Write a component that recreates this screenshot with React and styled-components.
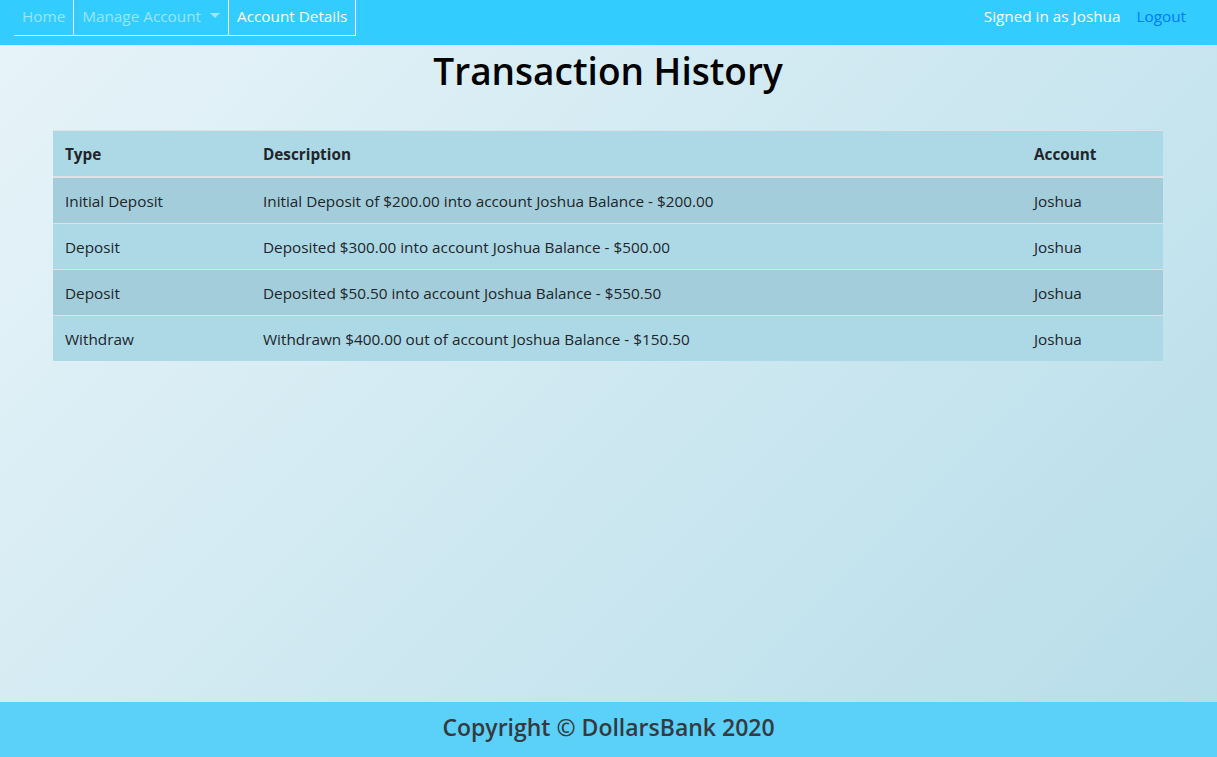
import React from "react";
import styled, { createGlobalStyle } from "styled-components";

const FONT = `"Segoe UI", "Open Sans", "Noto Sans", sans-serif`;

const Global = createGlobalStyle`
  html, body { margin: 0; padding: 0; height: 100%; }
  body {
    font-family: ${FONT};
    font-size: 15.3px;
    line-height: 23px;
    color: #212529;
  }
  #root { min-height: 100vh; }
`;

const Page = styled.div`
  min-height: 757px;
  display: flex;
  flex-direction: column;
  background: linear-gradient(135deg, #e8f4f9 0%, #b6dde9 100%);
`;

const NavBar = styled.nav`
  height: 45px;
  background: #33ccff;
  display: flex;
  align-items: flex-start;
  justify-content: space-between;
  padding: 0 31px 0 14px;
  box-sizing: border-box;
`;

const Tabs = styled.ul`
  list-style: none;
  margin: 0;
  padding: 0;
  display: flex;
  border-bottom: 1px solid #ffffff;
`;

const Tab = styled.li`
  height: 35px;
  box-sizing: border-box;
  padding: 0 8px 2px;
  display: flex;
  align-items: center;
  gap: 9px;
  color: ${(p) => (p.$active ? "#ffffff" : "rgba(255,255,255,0.5)")};
  border-left: ${(p) => (p.$left ? "1px solid #fff" : "0")};
  border-right: ${(p) => (p.$right ? "1px solid #fff" : "0")};
  cursor: pointer;
`;

const Caret = styled.span`
  width: 0;
  height: 0;
  border-left: 5px solid transparent;
  border-right: 5px solid transparent;
  border-top: 5px solid rgba(255,255,255,0.5);
  margin-top: -2px;
`;

const UserArea = styled.div`
  height: 35px;
  box-sizing: border-box;
  padding-bottom: 2px;
  display: flex;
  align-items: center;
  gap: 16px;
`;

const Signed = styled.span`
  color: #ffffff;
`;

const Logout = styled.a`
  color: #007bff;
  text-decoration: none;
`;

const Main = styled.main`
  flex: 1;
  display: flex;
  flex-direction: column;
  align-items: center;
  padding: 0 54px 0 53px;
`;

const Title = styled.h1`
  margin: 4px 0 37px;
  font-size: 37px;
  font-weight: 600;
  line-height: 44px;
  color: #000;
`;

const Table = styled.table`
  width: 100%;
  border-collapse: collapse;
  border-top: 1px solid #dee2e6;
`;

const Th = styled.th`
  text-align: left;
  font-weight: 700;
  padding: 12px 12px 10px;
  background: #add8e6;
  border-bottom: 2px solid #dee2e6;
  width: ${(p) => p.$w || "auto"};
`;

const Row = styled.tr`
  background: ${(p) => (p.$odd ? "#a3cdda" : "#add8e6")};
  border-top: 1px solid #dee2e6;
  &:first-child { border-top: 0; }
`;

const Td = styled.td`
  padding: 12px 12px 10px;
`;

const Footer = styled.footer`
  height: 55px;
  box-sizing: border-box;
  padding-bottom: 4px;
  background: #5bd0f9;
  display: flex;
  align-items: center;
  justify-content: center;
  font-size: 23px;
  font-weight: 600;
  color: #343a40;
`;

const rows = [
  ["Initial Deposit", "Initial Deposit of $200.00 into account Joshua Balance - $200.00", "Joshua"],
  ["Deposit", "Deposited $300.00 into account Joshua Balance - $500.00", "Joshua"],
  ["Deposit", "Deposited $50.50 into account Joshua Balance - $550.50", "Joshua"],
  ["Withdraw", "Withdrawn $400.00 out of account Joshua Balance - $150.50", "Joshua"],
];

export default function App() {
  return (
    <Page>
      <Global />
      <NavBar>
        <Tabs>
          <Tab>Home</Tab>
          <Tab $left $right>
            Manage Account <Caret />
          </Tab>
          <Tab $active $right>Account Details</Tab>
        </Tabs>
        <UserArea>
          <Signed>Signed in as Joshua</Signed>
          <Logout href="#">Logout</Logout>
        </UserArea>
      </NavBar>
      <Main>
        <Title>Transaction History</Title>
        <Table>
          <thead>
            <tr>
              <Th $w="174px">Type</Th>
              <Th>Description</Th>
              <Th $w="117px">Account</Th>
            </tr>
          </thead>
          <tbody>
            {rows.map((r, i) => (
              <Row key={i} $odd={i % 2 === 0}>
                <Td>{r[0]}</Td>
                <Td>{r[1]}</Td>
                <Td>{r[2]}</Td>
              </Row>
            ))}
          </tbody>
        </Table>
      </Main>
      <Footer>Copyright © DollarsBank 2020</Footer>
    </Page>
  );
}
